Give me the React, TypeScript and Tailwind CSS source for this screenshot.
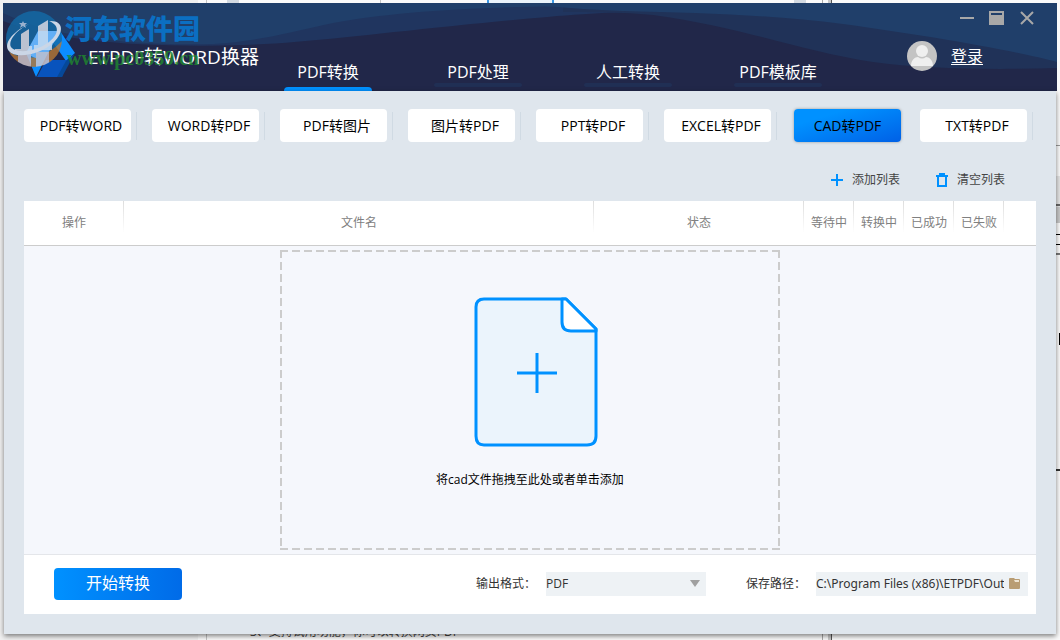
import React, { useState } from 'react';

interface Column {
  label: string;
  className: string;
}

const navItems = ['PDF转换', 'PDF处理', '人工转换', 'PDF模板库'];

const converters = [
  'PDF转WORD',
  'WORD转PDF',
  'PDF转图片',
  '图片转PDF',
  'PPT转PDF',
  'EXCEL转PDF',
  'CAD转PDF',
  'TXT转PDF',
];

const columns: Column[] = [
  { label: '操作', className: 'w-[100px]' },
  { label: '文件名', className: '' },
  { label: '状态', className: 'w-[210px]' },
  { label: '等待中', className: 'w-[50px]' },
  { label: '转换中', className: 'w-[50px]' },
  { label: '已成功', className: 'w-[50px]' },
  { label: '已失败', className: 'w-[50px]' },
];

// Windows that show around the edges of the application
const Desktop: React.FC = () => (
  <div className="absolute inset-0 overflow-hidden bg-[#fafafa]" aria-hidden="true">
    <div className="absolute left-0 top-0 h-full w-[198px] bg-[#f0f0f0]" />
    <div className="absolute left-[206px] top-0 h-full w-px bg-[#c4c4c4]" />
    <div className="absolute left-[227px] top-0 h-1 w-3 bg-[#d3dae2]" />
    <div className="absolute left-[380px] top-0 h-1 w-px bg-[#c4c4c4]" />
    <div className="absolute left-[487px] top-0 h-1 w-[67px] border-x-2 border-[#3b97e3] bg-[#eaf3fb]" />
    <div className="absolute left-[794px] top-0 h-1 w-3 bg-[#d3dae2]" />
    <div className="absolute left-[822px] top-0 h-full w-px bg-[#a8a8a8]" />
    <div className="absolute left-[828px] top-0 h-full w-1 border-r border-[#555555] bg-[#c9c9c9]" />
    <div className="absolute right-0 top-[145px] h-px w-1 bg-[#999999]" />
    <div className="absolute right-0 top-[176px] h-9 w-1 bg-[#e4e4e4]" />
    <div className="absolute right-0 top-[204px] h-[2px] w-1 bg-[#666666]" />
    <div className="absolute right-0 top-[207px] h-4 w-1 bg-[#c8c8c8]" />
    <div className="absolute right-0 top-[234px] h-px w-1 bg-black" />
    <div className="absolute right-0 top-[244px] h-px w-1 bg-black" />
    <div className="absolute right-0 top-[253px] h-[2px] w-1 bg-[#777777]" />
    <div className="absolute right-0 top-[333px] h-3 w-px bg-black" />
    <div className="absolute right-0 top-[469px] h-[2px] w-1 bg-[#333333]" />
    <div className="absolute bottom-0 left-[250px] whitespace-nowrap text-xs leading-4 text-[#444444]">
      3、支持试用功能，你可以转换网页PDF
    </div>
  </div>
);

const HeaderWaves: React.FC = () => (
  <svg
    className="absolute inset-0 h-full w-full"
    viewBox="0 0 1054 88"
    preserveAspectRatio="none"
    aria-hidden="true"
  >
    <path d="M0 0H640V9C590 9 540 14 450 23C360 32 300 40 240 42C140 45 50 38 0 18Z" fill="#20355f" />
    <path d="M0 0H640V3C500 2 400 7 330 20C280 31 250 39 210 41C130 43 50 35 0 10Z" fill="#203f6a" />
    <path d="M560 0H1054V65C990 67 920 66 870 59C800 49 740 24 650 12C620 9 590 9 560 9Z" fill="#203258" />
    <path d="M540 0H1054V59C1010 47 920 32 840 21C770 12 700 10 620 8C590 7 570 5 540 3Z" fill="#203f6a" />
  </svg>
);

const Brand: React.FC = () => (
  <div className="relative w-[250px] shrink-0">
    <svg className="absolute left-0 top-0" width="86" height="88" viewBox="3 3 86 88" aria-hidden="true">
      <defs>
        <clipPath id="badge">
          <circle cx="34" cy="39" r="28" />
        </clipPath>
      </defs>
      <path d="M38 31H60L46 57L36 77L26 53Z" fill="#0a8dff" />
      <path d="M60 31L75 53L66 61L52 41Z" fill="#0c8dff" />
      <path d="M46 60H67L62 77H37Z" fill="#0853bd" />
      <path d="M66 61L75 53L62 77H57Z" fill="#064899" />
      <g clipPath="url(#badge)" opacity="0.82">
        <rect x="5" y="10" width="58" height="58" fill="#146ba7" />
        <path d="M5 48Q17 60 36 57Q50 54 63 40V69H5Z" fill="#b47736" />
        <path d="M38 31H60L46 57Q39 62 26 53Z" fill="#77b7f5" />
        <path d="M21 34L29 29V46H32V54H15V49H21Z" fill="#dce4f0" />
        <path d="M38 26L48 20V44H52V50H34V45H38Z" fill="#dce4f0" />
        <path d="M18 53H31V67H18Z" fill="#d3c8cc" />
        <path d="M36 52H49V67H36Z" fill="#d3c8cc" />
        <path d="M23 21L24 23L27 23L25 25L26 28L23 26L20 28L21 25L19 23H22Z" fill="#b5cde7" />
      </g>
      <path
        d="M29 24C12 32 3 44 9 51C16 60 42 54 54 42C64 32 64 20 49 21C59 25 60 33 49 42C36 52 16 54 11 47C8 40 17 30 29 24Z"
        fill="#cbd6e6"
      />
    </svg>
    <span className="absolute left-[62px] top-[10px] whitespace-nowrap text-[27px] font-black leading-8 text-[#0b6fc2]">
      河东软件园
    </span>
    <h1 className="absolute left-[85px] top-[42px] whitespace-nowrap text-[19px] leading-6 text-white">ETPDF转WORD换器</h1>
    <span className="absolute left-[64px] top-[43px] whitespace-nowrap font-['Liberation_Serif',serif] text-[20px] font-bold leading-6 text-[#1f8a2e]/80">
      www.pc0359.cn
    </span>
  </div>
);

const WindowControls: React.FC = () => (
  <div className="flex items-center justify-end gap-[14px] pr-[22px] pt-[7px] text-[#a8a8a8]">
    <button type="button" aria-label="最小化" className="flex h-4 w-4 items-center justify-center">
      <svg width="16" height="16" viewBox="0 0 16 16"><path d="M1 8H15" stroke="currentColor" strokeWidth="2" /></svg>
    </button>
    <button type="button" aria-label="最大化" className="flex h-4 w-4 items-center justify-center">
      <svg width="16" height="16" viewBox="0 0 16 16">
        <path d="M0 1H15V15H0Z" fill="currentColor" />
        <path d="M2 3H13V5H2Z" fill="#203f6a" />
      </svg>
    </button>
    <button type="button" aria-label="关闭" className="flex h-4 w-4 items-center justify-center">
      <svg width="16" height="16" viewBox="0 0 16 16">
        <path d="M2 2L14 14M14 2L2 14" stroke="currentColor" strokeWidth="2" />
      </svg>
    </button>
  </div>
);

const Account: React.FC = () => (
  <div className="mt-[15px] flex items-center gap-[14px]">
    <svg width="30" height="30" viewBox="0 0 30 30" aria-hidden="true">
      <circle cx="15" cy="15" r="15" fill="#c4c4c4" />
      <circle cx="15" cy="10" r="6" fill="#efefef" />
      <path d="M4 25C4 19 8 16 11 16Q15 19 19 16C22 16 26 19 26 25Z" fill="#efefef" />
    </svg>
    <a href="#login" className="text-base leading-6 text-white underline underline-offset-2">登录</a>
  </div>
);

const DropZone: React.FC = () => (
  <label className="relative flex h-[300px] w-[500px] cursor-pointer flex-col items-center pt-[47px]">
    <svg className="absolute inset-0 h-full w-full" aria-hidden="true">
      <g stroke="#cccccc" strokeWidth="4" strokeDasharray="8 4">
        <path d="M0 0H500M0 300H500M0 0V300M500 0V300" />
      </g>
    </svg>
    <svg className="ml-3" width="124" height="150" viewBox="0 0 124 150" aria-hidden="true">
      <path
        d="M10 2H92L122 32V139Q122 148 113 148H10Q2 148 2 139V10Q2 2 10 2Z"
        fill="#ebf4fc"
        stroke="#0091ff"
        strokeWidth="3"
        strokeLinejoin="round"
      />
      <path d="M88 2V25Q88 34 97 34H122V32L92 2Z" fill="#ffffff" stroke="#0091ff" strokeWidth="3" strokeLinejoin="round" />
      <path d="M43 76H83M63 56V96" stroke="#0091ff" strokeWidth="3" />
    </svg>
    <span className="mt-[25px] text-xs leading-4 text-black">将cad文件拖拽至此处或者单击添加</span>
    <input type="file" accept=".dwg,.dxf" multiple className="sr-only" />
  </label>
);

const App: React.FC = () => {
  const [activeNav, setActiveNav] = useState('PDF转换');
  const [activeConverter, setActiveConverter] = useState('CAD转PDF');
  const [savePath, setSavePath] = useState('C:\\Program Files (x86)\\ETPDF\\Output');

  return (
    <div className="relative flex min-h-screen flex-col px-[3px] pb-[6px] pt-[3px] font-['Open_Sans','Noto_Sans_CJK_SC',sans-serif]">
      <Desktop />

      <header className="relative flex h-[88px] shrink-0 overflow-hidden bg-[#212749]">
        <HeaderWaves />
        <Brand />
        <nav className="relative flex">
          {navItems.map((item) => (
            <button
              key={item}
              type="button"
              onClick={() => setActiveNav(item)}
              className="flex w-[150px] flex-col items-center justify-end text-base text-white"
            >
              <span className="leading-6">{item}</span>
              {item === activeNav ? (
                <span className="mt-[3px] h-1 w-[88px] rounded-t-sm bg-[#0091ff]" />
              ) : (
                <span className="-mt-px mb-1 h-1 w-[88px] rounded-sm bg-[#202f54]" />
              )}
            </button>
          ))}
        </nav>
        <div className="relative ml-auto w-[150px] shrink-0">
          <WindowControls />
          <Account />
        </div>
      </header>

      <main className="relative mx-px flex flex-1 flex-col bg-[#dfe6ed] pb-5 shadow-[0_2px_5px_rgba(0,0,0,0.5)]">
        <div className="grid grid-cols-8 pl-5 pr-2 pt-[18px]">
          {converters.map((name) => {
            const active = name === activeConverter;
            return (
              <div key={name} className="flex items-center">
                <button
                  type="button"
                  onClick={() => setActiveConverter(name)}
                  className={`h-[33px] w-[107px] whitespace-nowrap rounded text-sm text-black ${
                    active
                      ? 'ml-[2px] bg-linear-to-br from-[#0091ff] from-25% to-[#0060e6] shadow-[0_0_3px_rgba(0,0,0,0.35)]'
                      : 'bg-white pl-[7px]'
                  }`}
                >
                  {name}
                </button>
                {!active && <span className="ml-[5px] h-7 w-px bg-[#d0dae3]" />}
              </div>
            );
          })}
        </div>

        <div className="flex justify-end gap-9 pb-[13px] pr-[51px] pt-[30px] text-xs leading-4 text-[#444444]">
          <button type="button" className="flex items-center gap-[9px]">
            <svg width="12" height="12" viewBox="0 0 12 12" aria-hidden="true">
              <path d="M0 6H12M6 0V12" stroke="#0091ff" strokeWidth="2" />
            </svg>
            添加列表
          </button>
          <button type="button" className="flex items-center gap-[9px]">
            <svg width="12" height="14" viewBox="0 0 12 14" aria-hidden="true">
              <path d="M0 3H12M3 1H9M2 3V13H10V3" fill="none" stroke="#0091ff" strokeWidth="2" />
            </svg>
            清空列表
          </button>
        </div>

        <section className="mx-5 flex flex-1 flex-col bg-white">
          <table className="w-full table-fixed border-collapse border-b border-[#cccccc] text-xs text-[#808080]">
            <thead>
              <tr className="h-11">
                {columns.map((column) => (
                  <th
                    key={column.label}
                    scope="col"
                    className={`bg-[linear-gradient(#dddddd,#ffffff)] bg-[length:1px_32px] bg-right-top bg-no-repeat p-0 text-center font-normal ${column.className}`}
                  >
                    {column.label}
                  </th>
                ))}
                <td className="w-8" />
              </tr>
            </thead>
          </table>

          <div className="flex flex-1 items-center justify-center bg-[#f5f7fc]">
            <DropZone />
          </div>

          <footer className="flex h-[60px] shrink-0 items-center border-t border-[#e4e6ea] pb-[2px] pl-[30px] pr-2 text-xs text-[#333333]">
            <button
              type="button"
              className="h-8 w-32 rounded bg-linear-to-r from-[#0091ff] to-[#006be8] pb-[2px] text-base text-white"
            >
              开始转换
            </button>
            <div className="ml-auto flex items-center">
              <label htmlFor="format" className="w-[70px]">输出格式：</label>
              <div className="relative mr-10">
                <select id="format" className="h-6 w-40 appearance-none bg-[#eef2f5] text-xs">
                  <option>PDF</option>
                </select>
                <svg className="pointer-events-none absolute right-[6px] top-2" width="10" height="7" viewBox="0 0 10 7">
                  <path d="M0 0H10L5 7Z" fill="#a0a0a0" />
                </svg>
              </div>
              <label htmlFor="path" className="w-[70px]">保存路径：</label>
              <div className="flex h-6 w-[212px] items-center bg-[#eef2f5] pr-2">
                <input
                  id="path"
                  type="text"
                  value={savePath}
                  onChange={(e) => setSavePath(e.target.value)}
                  className="w-[188px] bg-transparent font-['Noto_Sans',sans-serif] text-xs outline-none"
                />
                <button type="button" aria-label="选择文件夹" className="ml-[5px]">
                  <svg width="11" height="11" viewBox="0 0 11 11">
                    <path d="M1 0H5L6 1H10Q11 1 11 2V10Q11 11 10 11H1Q0 11 0 10V1Q0 0 1 0Z" fill="#b99d73" />
                    <path d="M5 2H10V4H6Z" fill="#eee4d2" />
                  </svg>
                </button>
              </div>
            </div>
          </footer>
        </section>
      </main>
    </div>
  );
};

export default App;
